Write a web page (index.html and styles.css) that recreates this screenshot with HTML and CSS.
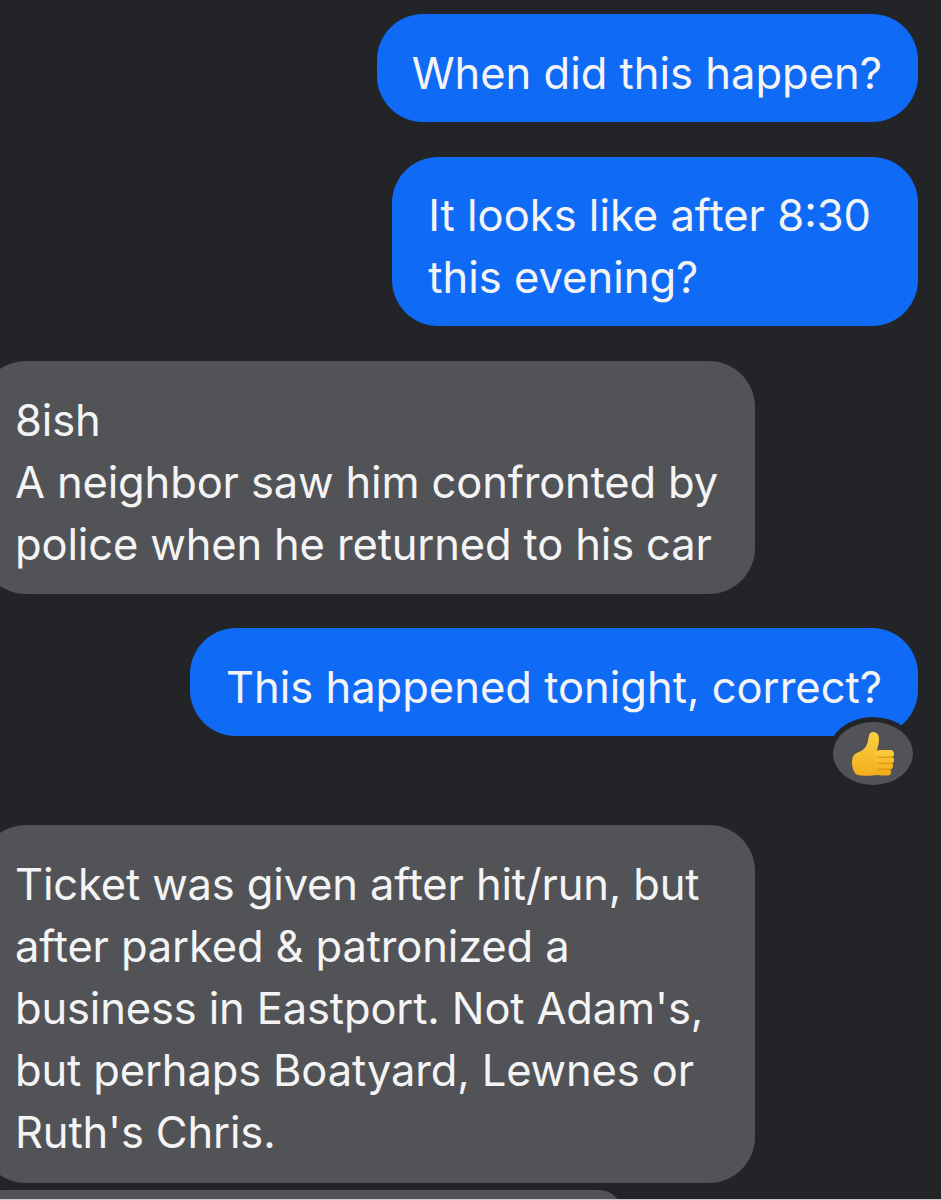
FILE: index.html
```html
<!DOCTYPE html>
<html lang="en">
<head>
  <meta charset="UTF-8" />
  <meta name="viewport" content="width=device-width, initial-scale=1.0" />
  <title>Messages</title>
  <link rel="stylesheet" href="styles.css">
</head>
<body>
  <div class="thread">
    <div class="bubble sent first">When did this happen?</div>
    <div class="bubble sent second">It looks like after 8:30<br>this evening?</div>
    <div class="bubble received third">8ish<br>A neighbor saw him confronted by<br>police when he returned to his car</div>
    <div class="reacted">
      <div class="bubble sent">This happened tonight, correct?</div>
      <div class="reaction">
        <svg class="thumb" viewBox="0 0 42 44" width="42" height="44" aria-hidden="true">
          <defs>
            <linearGradient id="skin" x1="0" y1="0" x2="0" y2="1">
              <stop offset="0" stop-color="#fbd045"/>
              <stop offset="1" stop-color="#f3ae1c"/>
            </linearGradient>
          </defs>
          <path fill="url(#skin)" d="M0 30C0 24 3 21 7 20C12 18 15 14 16 9C17 4 17 0 21 0C25 0 27 3 27 7C27 11 26 15 25 18L26 43C18 44 10 44 6 43C2 42 0 36 0 30z"/>
          <rect fill="#fac93a" x="24" y="18" width="18" height="7.5" rx="3.7"/>
          <rect fill="#f8c030" x="24" y="24.5" width="18" height="7" rx="3.5"/>
          <rect fill="#f6b726" x="24.5" y="30.5" width="16.5" height="7" rx="3.5"/>
          <rect fill="#f3ae1c" x="25" y="36.5" width="14" height="7" rx="3.5"/>
          <path fill="none" stroke="#d98e10" stroke-width="1" d="M26 25.2H41M26 31.2H40.5M26 37.2H38.5"/>
        </svg>
      </div>
    </div>
    <div class="bubble received fifth">Ticket was given after hit/run, but<br>after parked &amp; patronized a<br>business in Eastport. Not Adam's,<br>but perhaps Boatyard, Lewnes or<br>Ruth's Chris.</div>
    <div class="bubble received next"></div>
  </div>
  <div class="edge"></div>
</body>
</html>
```

FILE: styles.css
```css
html, body {
  margin: 0;
  height: 1200px;
  overflow: hidden;
  background-color: #232427;
}
.thread {
  display: flex;
  flex-direction: column;
  box-sizing: border-box;
  height: 1199px;
  overflow: hidden;
  padding: 14px 23px 0 0;
  font-family: Inter, "Liberation Sans", sans-serif;
  font-size: 43.5px;
  line-height: 62px;
  color: #f4f4f5;
}
.edge {
  height: 1px;
  background-color: #c9c9cb;
}
.bubble {
  flex: none;
  box-sizing: border-box;
  padding: 28px 36px 18px;
  border-radius: 46px;
}
.sent {
  align-self: flex-end;
  background-color: #0f6bf5;
}
.received {
  align-self: flex-start;
  width: 775px;
  margin-left: -20px;
  padding-left: 35px;
  padding-right: 0;
  letter-spacing: -0.15px;
  background-color: #525357;
}
.first {
  padding-left: 35px;
}
.second {
  margin-top: 35px;
  padding: 27px 47px 18px 36px;
}
.third {
  margin-top: 35px;
  padding-bottom: 19px;
}
.reacted {
  display: flex;
  flex-direction: column;
  align-items: flex-end;
  margin-top: 34px;
}
.reaction {
  display: flex;
  align-items: center;
  justify-content: center;
  width: 80px;
  height: 63px;
  margin-top: -14px;
  margin-right: 5px;
  border-radius: 50%;
  background-color: #525357;
  box-shadow: 0 0 0 5px #232427;
}
.fifth {
  margin-top: 40px;
  padding-bottom: 20px;
}
.next {
  width: 642px;
  height: 40px;
  margin-top: 7px;
}
```
